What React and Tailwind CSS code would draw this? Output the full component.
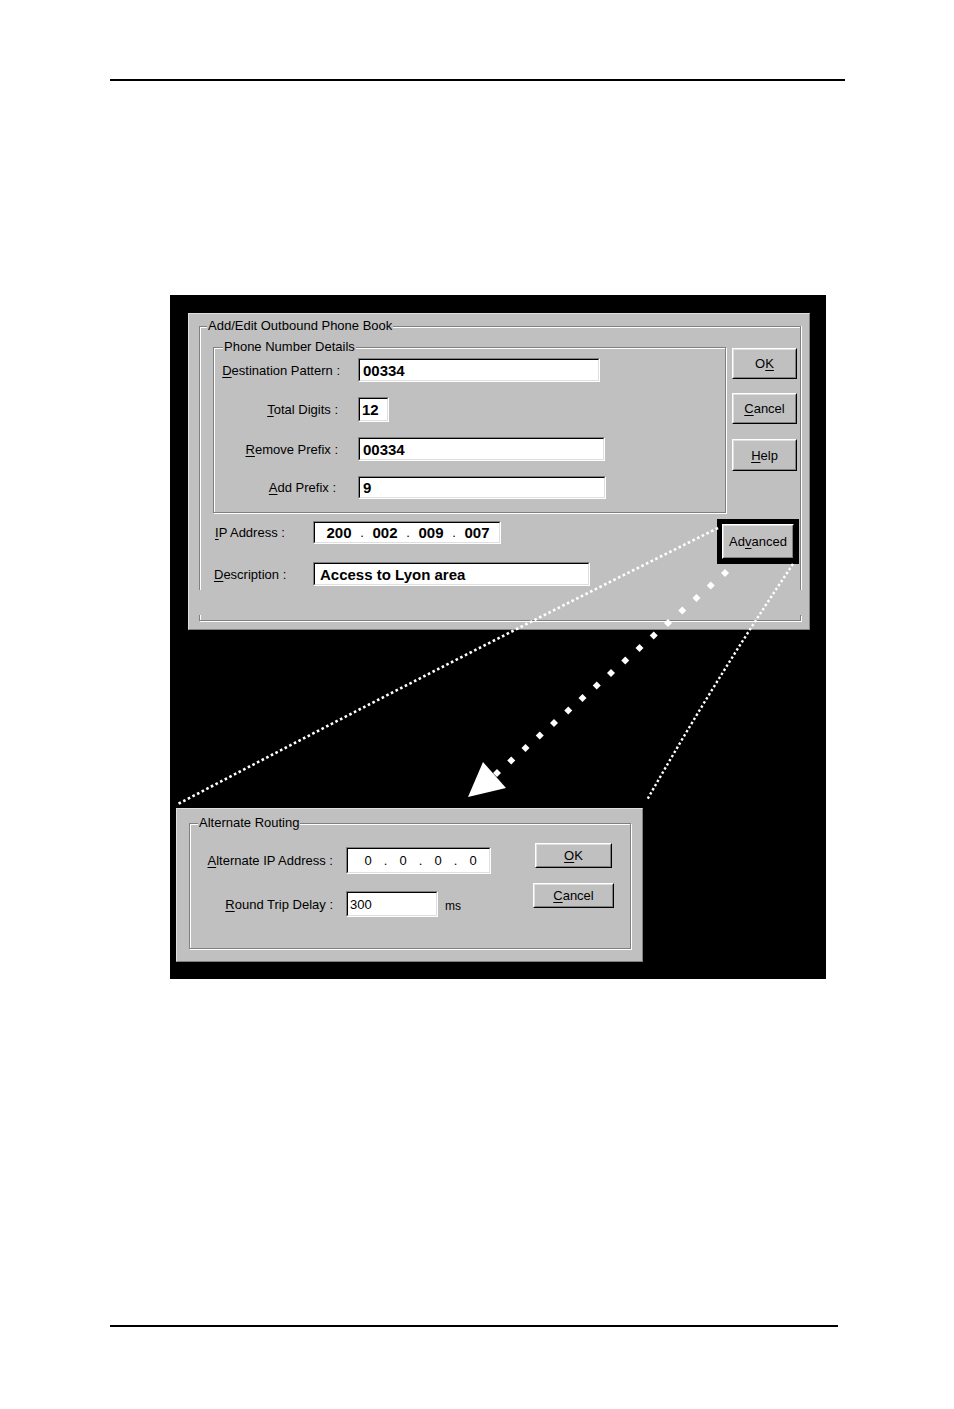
import React from 'react';

function U({ children }) {
  return <span className="underline decoration-1 underline-offset-[2px]">{children}</span>;
}

function Field({ className = '', inner = '', children }) {
  return (
    <div className={'border border-t-[#808080] border-l-[#808080] border-b-white border-r-white ' + className}>
      <div className={'h-full w-full bg-white border border-t-black border-l-black border-b-[#dfdfdf] border-r-[#dfdfdf] flex items-center overflow-hidden ' + inner}>
        {children}
      </div>
    </div>
  );
}

function Btn({ className = '', children }) {
  return (
    <div className={'bg-[#c0c0c0] border border-t-white border-l-white border-b-black border-r-black ' + className}>
      <div className="h-full w-full border border-t-[#dfdfdf] border-l-[#dfdfdf] border-b-[#808080] border-r-[#808080] flex items-center justify-center text-[13px] leading-none">
        {children}
      </div>
    </div>
  );
}

function Legend({ className = '', children }) {
  return (
    <span className={'absolute top-[-9px] bg-[#c0c0c0] px-[1px] text-[13px] leading-[15px] whitespace-nowrap ' + className}>
      {children}
    </span>
  );
}

function Overlay() {
  const dots = [];
  for (let i = 0; i <= 16; i++) {
    const cx = 555 - 14.25 * i;
    const cy = 278 + 12.5 * i;
    const h = 4;
    dots.push(
      <polygon
        key={i}
        points={`${cx},${cy - h} ${cx + h},${cy} ${cx},${cy + h} ${cx - h},${cy}`}
        fill="#fff"
      />
    );
  }
  return (
    <svg className="absolute inset-0 pointer-events-none" width="656" height="684" viewBox="0 0 656 684">
      <path d="M548 233 Q 280 366 8 509" stroke="#fff" strokeWidth="2.6" strokeDasharray="2.6 2.6" fill="none" />
      <path d="M623 269 Q 545 385 477 505" stroke="#fff" strokeWidth="2.4" strokeDasharray="2.4 2.4" fill="none" />
      {dots}
      <polygon points="313,467 298,502 336,493" fill="#fff" />
    </svg>
  );
}

export default function App() {
  return (
    <div className="w-[954px] h-[1409px] bg-white flex flex-col font-['Liberation_Sans',Arial,sans-serif] text-black">
      <div className="mt-[79px] ml-[110px] w-[735px] h-[2px] bg-black" />

      <div className="relative mt-[214px] ml-[170px] w-[656px] h-[684px] bg-black flex flex-col pt-[18px]">
        {/* Upper dialog */}
        <div className="ml-[18px] w-[622px] h-[317px] bg-[#c0c0c0] border border-t-[#dfdfdf] border-l-[#dfdfdf] border-b-[#808080] border-r-[#808080] pt-[12px] pl-[10px]">
          <div className="relative w-[602px] h-[264px] border-t border-l border-r border-[#808080] shadow-[inset_1px_1px_0_#fff,1px_0_0_#fff]">
            <Legend className="left-[7px]">Add/Edit Outbound Phone Book</Legend>

            <div className="flex pl-[13px] pt-[20px]">
              <div className="relative w-[513px] h-[166px] border border-[#808080] shadow-[inset_1px_1px_0_#fff,1px_1px_0_#fff] flex flex-col">
                <Legend className="left-[9px]">Phone Number Details</Legend>

                <div className="mt-[10px] h-[24px] flex items-center">
                  <div className="w-[126px] text-right text-[13px] leading-none whitespace-nowrap"><U>D</U>estination Pattern :</div>
                  <Field className="ml-[18px] w-[242px] h-[24px]" inner="pl-[3px]">
                    <span className="text-[15px] font-bold leading-none">00334</span>
                  </Field>
                </div>
                <div className="mt-[15px] h-[25px] flex items-center">
                  <div className="w-[124px] text-right text-[13px] leading-none whitespace-nowrap"><U>T</U>otal Digits :</div>
                  <Field className="ml-[20px] w-[31px] h-[25px]" inner="pl-[2px]">
                    <span className="text-[15px] font-bold leading-none">12</span>
                  </Field>
                </div>
                <div className="mt-[15px] h-[24px] flex items-center">
                  <div className="w-[124px] text-right text-[13px] leading-none whitespace-nowrap"><U>R</U>emove Prefix :</div>
                  <Field className="ml-[20px] w-[247px] h-[24px]" inner="pl-[3px]">
                    <span className="text-[15px] font-bold leading-none">00334</span>
                  </Field>
                </div>
                <div className="mt-[15px] h-[23px] flex items-center">
                  <div className="w-[122px] text-right text-[13px] leading-none whitespace-nowrap"><U>A</U>dd Prefix :</div>
                  <Field className="ml-[22px] w-[248px] h-[23px]" inner="pl-[3px]">
                    <span className="text-[15px] font-bold leading-none">9</span>
                  </Field>
                </div>
              </div>

              <div className="ml-[6px] mt-[1px] flex flex-col">
                <Btn className="w-[65px] h-[31px]">O<U>K</U></Btn>
                <Btn className="mt-[14px] w-[65px] h-[31px]"><U>C</U>ancel</Btn>
                <Btn className="mt-[15px] w-[65px] h-[32px]"><U>H</U>elp</Btn>
              </div>
            </div>

            <div className="flex items-start">
              <div className="ml-[15px] mt-[8px] flex flex-col">
                <div className="h-[23px] flex items-center">
                  <div className="w-[98px] text-[13px] leading-none whitespace-nowrap"><U>I</U>P Address :</div>
                  <Field className="w-[188px] h-[23px]" inner="pl-[11px]">
                    {['200', '.', '002', '.', '009', '.', '007'].map((t, i) =>
                      t === '.' ? (
                        <span key={i} className="w-[20px] text-center text-[13px] leading-none">.</span>
                      ) : (
                        <span key={i} className="w-[26px] text-center text-[15px] font-bold leading-none">{t}</span>
                      )
                    )}
                  </Field>
                </div>
                <div className="mt-[18px] h-[24px] flex items-center">
                  <div className="w-[98px] -ml-[1px] text-[13px] leading-none whitespace-nowrap"><U>D</U>escription :</div>
                  <Field className="ml-[1px] w-[277px] h-[24px]" inner="pl-[5px]">
                    <span className="text-[15px] font-bold leading-none">Access to Lyon area</span>
                  </Field>
                </div>
              </div>

              <div className="ml-[127px] mt-[6px] w-[82px] h-[45px] border-[5px] border-black bg-black">
                <Btn className="w-full h-full">Ad<U>v</U>anced</Btn>
              </div>
            </div>
          </div>
          <div className="mt-[25px] w-[602px] h-[6px] border-b border-l border-r border-[#808080] shadow-[inset_1px_0_0_#fff,1px_1px_0_#fff]" />
        </div>

        {/* Lower dialog */}
        <div className="ml-[6px] mt-[178px] w-[467px] h-[154px] bg-[#c0c0c0] border border-t-[#dfdfdf] border-l-[#dfdfdf] border-b-[#808080] border-r-[#808080] pt-[14px] pl-[12px]">
          <div className="relative w-[442px] h-[126px] border border-[#808080] shadow-[inset_1px_1px_0_#fff,1px_1px_0_#fff] flex">
            <Legend className="left-[8px]">Alternate Routing</Legend>

            <div className="flex flex-col">
              <div className="mt-[23px] h-[27px] flex items-center">
                <div className="w-[143px] text-right text-[13px] leading-none whitespace-nowrap"><U>A</U>lternate IP Address :</div>
                <Field className="ml-[13px] w-[145px] h-[27px]" inner="pl-[11px]">
                  {['0', '.', '0', '.', '0', '.', '0'].map((t, i) =>
                    t === '.' ? (
                      <span key={i} className="w-[17px] text-center text-[13px] leading-none">.</span>
                    ) : (
                      <span key={i} className="w-[18px] text-center text-[13px] leading-none">{t}</span>
                    )
                  )}
                </Field>
              </div>
              <div className="mt-[17px] h-[26px] flex items-center">
                <div className="w-[143px] text-right text-[13px] leading-none whitespace-nowrap"><U>R</U>ound Trip Delay :</div>
                <Field className="ml-[13px] w-[92px] h-[26px]" inner="pl-[2px]">
                  <span className="text-[13px] leading-none">300</span>
                </Field>
                <span className="ml-[7px] pt-[4px] text-[12px] leading-none">ms</span>
              </div>
            </div>

            <div className="ml-[44px] flex flex-col">
              <Btn className="mt-[19px] w-[77px] h-[25px]"><U>O</U>K</Btn>
              <Btn className="mt-[15px] -ml-[2px] w-[81px] h-[25px]"><U>C</U>ancel</Btn>
            </div>
          </div>
        </div>

        <Overlay />
      </div>

      <div className="mt-[346px] ml-[110px] w-[728px] h-[2px] bg-black" />
    </div>
  );
}
